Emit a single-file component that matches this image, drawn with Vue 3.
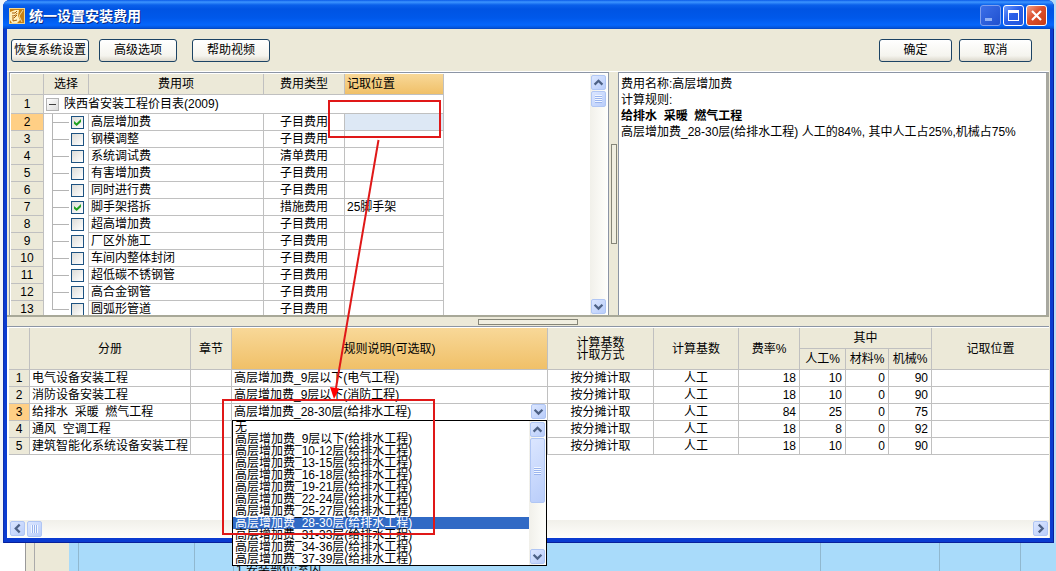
<script setup>
import { ref } from 'vue'

const fees = ref([
  { name: '高层增加费', type: '子目费用', place: '', on: true },
  { name: '钢模调整', type: '子目费用', place: '', on: false },
  { name: '系统调试费', type: '清单费用', place: '', on: false },
  { name: '有害增加费', type: '子目费用', place: '', on: false },
  { name: '同时进行费', type: '子目费用', place: '', on: false },
  { name: '脚手架搭拆', type: '措施费用', place: '25脚手架', on: true },
  { name: '超高增加费', type: '子目费用', place: '', on: false },
  { name: '厂区外施工', type: '子目费用', place: '', on: false },
  { name: '车间内整体封闭', type: '子目费用', place: '', on: false },
  { name: '超低碳不锈钢管', type: '子目费用', place: '', on: false },
  { name: '高合金钢管', type: '子目费用', place: '', on: false },
  { name: '圆弧形管道', type: '子目费用', place: '', on: false },
])

const volumes = [
  { name: '电气设备安装工程', rule: '高层增加费_9层以下(电气工程)', rate: 18, labor: 10, material: 0, machine: 90 },
  { name: '消防设备安装工程', rule: '高层增加费_9层以下(消防工程)', rate: 18, labor: 10, material: 0, machine: 90 },
  { name: '给排水\u00a0 采暖\u00a0 燃气工程', rule: '', rate: 84, labor: 25, material: 0, machine: 75, active: true },
  { name: '通风\u00a0 空调工程', rule: '', rate: 18, labor: 8, material: 0, machine: 92 },
  { name: '建筑智能化系统设备安装工程', rule: '', rate: 18, labor: 10, material: 0, machine: 90 },
]

const floors = ['9层以下', '10-12层', '13-15层', '16-18层', '19-21层', '22-24层', '25-27层', '28-30层', '31-33层', '34-36层', '37-39层']
const options = ['无', ...floors.map((f) => `高层增加费_${f}(给排水工程)`)]
const chosen = ref(options[8])
</script>

<template>
  <div class="desktop">
    <div class="backdrop" aria-hidden="true">
      <div class="sheet">
        <span class="b-edge"></span><span class="b-gap"></span><span class="b-head"></span>
        <span class="b-cell c9"></span><span class="b-cell c116"></span>
        <span class="b-cell c39"></span><span class="b-cell wide">1 安装部位:室内</span>
        <span class="b-cell c119"></span><span class="b-cell c81"></span><span class="b-cell c35"></span>
      </div>
    </div>

    <main class="window">
      <header class="titlebar">
        <svg class="logo" viewBox="0 0 16 16" aria-hidden="true">
          <rect width="16" height="16" fill="#f3d58c" />
          <rect x="1" y="1" width="14" height="14" fill="#c98212" />
          <path d="M1 4 6 2 10 2 9 8 11 12 8 15 3 15 1 12z" fill="#fff0bd" />
          <path d="M3 5h3l2-2M3 8c3 0 4-1 5-3M4 9v4l4-1M8 7l-3 3" fill="none" stroke="#a85f08" />
          <path d="M14 2 10 8l3 6" fill="none" stroke="#f7dc9a" />
        </svg>
        <h1>统一设置安装费用</h1>
        <button type="button" class="cap min" aria-label="最小化">
          <svg viewBox="0 0 19 19"><path d="M4 12h7v3H4z" fill="#8fb0f5" /></svg>
        </button>
        <button type="button" class="cap" aria-label="最大化">
          <svg viewBox="0 0 19 19"><path d="M4 4h11v11H4z M5 7v7h9V7z" fill="#fff" fill-rule="evenodd" /></svg>
        </button>
        <button type="button" class="cap close" aria-label="关闭">
          <svg viewBox="0 0 19 19"><path d="M5 5l9 9M14 5l-9 9" stroke="#fff" stroke-width="2.2" /></svg>
        </button>
      </header>

      <div class="body">
        <div class="toolbar">
          <button type="button" class="btn">恢复系统设置</button>
          <button type="button" class="btn">高级选项</button>
          <button type="button" class="btn video">帮助视频</button>
          <span class="fill"></span>
          <button type="button" class="btn short">确定</button>
          <button type="button" class="btn short">取消</button>
        </div>

        <div class="upper">
          <section class="panel fees">
            <div class="viewport">
              <table class="fee-table">
                <colgroup><col class="w33" /><col class="w45" /><col class="w175" /><col class="w81" /><col class="w99" /></colgroup>
                <thead>
                  <tr><th></th><th>选择</th><th>费用项</th><th>费用类型</th><th class="hot left">记取位置</th></tr>
                </thead>
                <tbody>
                  <tr class="root">
                    <th scope="row">1</th>
                    <td colspan="4">
                      <div class="root-line">
                        <button type="button" class="toggle" aria-label="折叠"></button>
                        <span>陕西省安装工程价目表(2009)</span>
                      </div>
                    </td>
                  </tr>
                  <tr v-for="(f, i) in fees" :key="f.name">
                    <th scope="row" :class="{ current: i === 0 }">{{ i + 2 }}</th>
                    <td class="pick">
                      <div class="pick-line">
                        <span class="branch" :class="{ last: i === fees.length - 1 }"></span>
                        <input :id="'fee' + i" v-model="f.on" type="checkbox" />
                      </div>
                    </td>
                    <td><label :for="'fee' + i">{{ f.name }}</label></td>
                    <td class="mid">{{ f.type }}</td>
                    <td :class="{ focus: i === 0 }">{{ f.place }}</td>
                  </tr>
                </tbody>
              </table>
            </div>
            <div class="vbar">
              <button type="button" class="sb" aria-label="向上"><svg viewBox="0 0 15 15"><path d="M3 10l4.500-4.500L12 10" /></svg></button>
              <span class="thumb"><i class="ridges"></i></span>
              <span class="fill"></span>
              <button type="button" class="sb" aria-label="向下"><svg viewBox="0 0 15 15"><path d="M3 5.500l4.500 4.500L12 5.500" /></svg></button>
            </div>
          </section>
          <div class="vsplit"><span class="grip"></span></div>
          <section class="panel note">
            <p>费用名称:高层增加费</p>
            <p>计算规则:</p>
            <p><b>给排水&nbsp; 采暖&nbsp; 燃气工程</b></p>
            <p>高层增加费_28-30层(给排水工程) 人工的84%, 其中人工占25%,机械占75%</p>
          </section>
        </div>

        <div class="hsplit"><span class="grip"></span></div>

        <section class="lower">
          <table class="rule-table">
            <colgroup>
              <col class="w21" /><col class="w161" /><col class="w41" /><col class="w316" /><col class="w106" />
              <col class="w85" /><col class="w61" /><col class="w46" /><col class="w43" /><col class="w43" /><col />
            </colgroup>
            <thead>
              <tr>
                <th rowspan="2"></th><th rowspan="2">分册</th><th rowspan="2">章节</th>
                <th rowspan="2" class="hot">规则说明(可选取)</th>
                <th rowspan="2" class="stack">计算基数<br />计取方式</th>
                <th rowspan="2">计算基数</th><th rowspan="2">费率%</th>
                <th colspan="3">其中</th><th rowspan="2" class="end">记取位置</th>
              </tr>
              <tr><th>人工%</th><th>材料%</th><th>机械%</th></tr>
            </thead>
            <tbody>
              <tr v-for="(v, i) in volumes" :key="v.name">
                <th scope="row" :class="{ current: v.active }">{{ i + 1 }}</th>
                <td>{{ v.name }}</td>
                <td></td>
                <td v-if="v.active" class="editor">
                  <div class="combo">
                    <select v-model="chosen" aria-label="规则说明">
                      <option v-for="o in options" :key="o">{{ o }}</option>
                    </select>
                    <span class="drop"><svg viewBox="0 0 15 15"><path d="M3 5.500l4.500 4.500L12 5.500" /></svg></span>
                  </div>
                  <div class="popup">
                    <ul role="listbox" aria-label="规则选项">
                      <li v-for="o in options" :key="o" role="option" :aria-selected="o === chosen" :class="{ sel: o === chosen }" @click="chosen = o">{{ o }}</li>
                    </ul>
                    <div class="vbar">
                      <button type="button" class="sb" aria-label="向上"><svg viewBox="0 0 15 15"><path d="M3 10l4.500-4.500L12 10" /></svg></button>
                      <span class="thumb tall"><i class="ridges"></i></span>
                      <span class="fill"></span>
                      <button type="button" class="sb" aria-label="向下"><svg viewBox="0 0 15 15"><path d="M3 5.500l4.500 4.500L12 5.500" /></svg></button>
                    </div>
                  </div>
                </td>
                <td v-else>{{ v.rule }}</td>
                <td class="mid">按分摊计取</td>
                <td class="mid">人工</td>
                <td class="num">{{ v.rate }}</td>
                <td class="num">{{ v.labor }}</td>
                <td class="num">{{ v.material }}</td>
                <td class="num">{{ v.machine }}</td>
                <td class="end"></td>
              </tr>
            </tbody>
          </table>
          <div class="hbar">
            <button type="button" class="sb" aria-label="向左"><svg viewBox="0 0 15 15"><path d="M10 3L5.500 7.500 10 12" /></svg></button>
            <span class="thumb"><i class="ridges side"></i></span>
            <span class="fill"></span>
            <button type="button" class="sb" aria-label="向右"><svg viewBox="0 0 15 15"><path d="M5.500 3l4.500 4.500L5.500 12" /></svg></button>
          </div>
        </section>
      </div>
    </main>

    <svg class="marks" width="460" height="560" viewBox="0 0 460 560" aria-hidden="true">
      <g fill="none" stroke="#e01818" stroke-width="2">
        <rect x="329" y="101" width="111" height="36" />
        <rect x="223" y="400" width="211" height="134" />
        <path d="M378.500 140L336 388" />
      </g>
      <path d="M334 399l-4-12 9.500 1.500z" fill="#f00" />
    </svg>
  </div>
</template>

<style>
body {
  margin: 0;
}
</style>

<style scoped>
* {
  box-sizing: border-box;
}
.desktop {
  position: relative;
  min-height: 100vh;
  padding: 0 2px 28px 3px;
  overflow: hidden;
  font: 12px/16px "Liberation Sans", "Noto Sans CJK SC", sans-serif;
  color: #000;
}
button,
select {
  font: inherit;
  color: inherit;
  padding: 0;
}
.backdrop {
  position: absolute;
  inset: 0;
  display: flex;
  flex-direction: column;
  justify-content: flex-end;
  background: linear-gradient(90deg, #f2f5fa 50%, #b4dcf8 50%);
}
.sheet {
  display: flex;
  height: 28px;
  background: #a9dbfa;
}
.b-edge {
  width: 26px;
  background: #fff;
  border-right: 1px solid #999;
}
.b-gap {
  width: 9px;
  background: #ece9d8;
  border-right: 1px solid #aaa;
}
.b-head {
  width: 34px;
  background: #ece9d8;
}
.b-cell {
  border-right: 1px solid #90b8cf;
  white-space: nowrap;
}
.c9 { width: 10px; }
.c116 { width: 116px; }
.c39 { width: 39px; }
.wide {
  flex: 1;
  padding: 19px 2px 0;
}
.c119 { width: 119px; }
.c81 { width: 81px; }
.c35 { width: 35px; border: 0; }

.window {
  position: relative;
  border-radius: 7px 7px 0 0;
  background: #0a3bd0;
  box-shadow: inset 1px 0 #0c2fb0, inset -1px -1px #08209a;
  padding: 0 4px 5px;
}
.titlebar {
  display: flex;
  align-items: center;
  gap: 2px;
  height: 29px;
  margin: 0 -4px;
  padding: 2px 7px 0 6px;
  border-radius: 7px 7px 0 0;
  background: linear-gradient(#0a5ae8 0, #3d95ff 2px, #0a60ea 5px, #0054e3 9px, #0058ea 18px, #0566fc 25px, #0453d8 28px, #0341b8);
}
.logo {
  width: 16px;
  height: 16px;
}
h1 {
  flex: 1;
  margin: 0 0 0 2px;
  font-size: 14px;
  line-height: 20px;
  font-weight: 700;
  color: #fff;
  text-shadow: 1px 1px #0b2a80;
}
.cap {
  width: 21px;
  height: 21px;
  border: 1px solid #fff;
  border-radius: 3px;
  background: linear-gradient(135deg, #6d9bff, #2a5fe8 45%, #2257dc);
}
.cap svg {
  display: block;
  width: 19px;
  height: 19px;
}
.min {
  border-color: #7f9fee;
  background: linear-gradient(135deg, #3c6fe8, #1f50cf);
}
.close {
  background: linear-gradient(135deg, #f0a088, #dc4f2c 45%, #c83c14);
}
.body {
  background: #ece9d8;
  padding-right: 1px;
}
.toolbar {
  display: flex;
  align-items: center;
  gap: 7px;
  height: 43px;
  padding: 0 17px 0 4px;
  border-bottom: 1px solid #fff;
}
.fill {
  flex: 1;
}
.btn {
  width: 78px;
  height: 23px;
  margin-right: 3px;
  border: 1px solid #1c4364;
  border-radius: 3px;
  background: linear-gradient(#fff, #f5f4ee 75%, #dcd8cc);
  white-space: nowrap;
}
.video {
  margin-left: 5px;
}
.short {
  width: 73px;
  margin-right: 0;
}
.upper {
  display: flex;
  padding-left: 2px;
  border-bottom: 2px solid #a8a898;
}
.panel {
  border: 1px solid #8c95a5;
  border-bottom: 0;
  background: #fff;
}
.fees {
  flex: 0 1 600px;
  display: flex;
  padding: 1px 1px 0;
}
.viewport {
  flex: 1;
  height: 241px;
  overflow: hidden;
}
table {
  table-layout: fixed;
  border-collapse: separate;
  border-spacing: 0;
}
.fee-table {
  width: 433px;
}
.w33 { width: 33px; }
.w45 { width: 45px; }
.w175 { width: 175px; }
.w81 { width: 81px; }
.w99 { width: 99px; }
.w21 { width: 21px; }
.w161 { width: 161px; }
.w41 { width: 41px; }
.w316 { width: 316px; }
.w106 { width: 106px; }
.w85 { width: 85px; }
.w61 { width: 61px; }
.w46 { width: 46px; }
.w43 { width: 43px; }
th,
td {
  height: 17px;
  padding: 0 2px;
  border-right: 1px solid #c0c0c0;
  border-bottom: 1px solid #c0c0c0;
  font-weight: 400;
  line-height: 16px;
  white-space: nowrap;
  text-align: left;
  vertical-align: middle;
}
th {
  background: #ece9d8;
  text-align: center;
}
thead th {
  height: 21px;
}
.left {
  text-align: left;
}
.hot {
  background: linear-gradient(#f8d898, #f0c068);
}
.current {
  background: #ffcf85;
}
.root th,
.root td {
  height: 19px;
}
.root-line {
  display: flex;
  align-items: center;
  gap: 5px;
}
.toggle {
  width: 13px;
  height: 13px;
  border: 1px solid #b4b4b4;
  background: linear-gradient(#404040, #404040) center / 7px 1px no-repeat, linear-gradient(135deg, #fff, #dcdcdc);
}
.pick {
  padding: 0 0 0 8px;
  border-bottom: 0;
}
.pick-line {
  display: flex;
  align-items: center;
  gap: 2px;
  height: 17px;
}
.branch {
  width: 17px;
  height: 17px;
  border-left: 1px solid #b4b4b4;
  background: linear-gradient(#b4b4b4, #b4b4b4) 0 8px / 100% 1px no-repeat;
}
.last {
  height: 9px;
  align-self: flex-start;
}
input[type="checkbox"] {
  appearance: none;
  width: 13px;
  height: 13px;
  margin: 0;
  border: 1px solid #1d5281;
  background: linear-gradient(135deg, #dcdcd8, #fff);
}
input:checked::after {
  content: "";
  display: block;
  width: 7px;
  height: 7px;
  margin: 2px;
  background: #21a121;
  clip-path: polygon(0 28%, 38% 62%, 100% 0, 100% 42%, 38% 100%, 0 68%);
}
.mid {
  text-align: center;
}
.num {
  text-align: right;
  padding-right: 3px;
}
.focus {
  background: #dde8f5;
}
.vbar {
  display: flex;
  flex-direction: column;
  gap: 1px;
  width: 17px;
  padding: 1px;
  background: linear-gradient(90deg, #f1f0ea, #fefefb);
}
.sb,
.thumb,
.drop {
  display: block;
  flex: none;
  width: 15px;
  height: 15px;
  border: 1px solid #b0c6f4;
  border-radius: 2px;
  background: linear-gradient(135deg, #dbe6ff, #b9cdfa);
}
.sb svg,
.drop svg {
  display: block;
  width: 13px;
  height: 13px;
  fill: none;
  stroke: #4d6185;
  stroke-width: 2.600;
}
.thumb {
  display: flex;
  align-items: center;
  justify-content: center;
  height: 16px;
}
.tall {
  height: 65px;
}
.ridges {
  width: 7px;
  height: 8px;
  background: repeating-linear-gradient(#f2f7ff 0 1px, #9ab4ee 1px 2px);
}
.side {
  background: repeating-linear-gradient(90deg, #f2f7ff 0 1px, #9ab4ee 1px 2px);
}
.vsplit {
  display: flex;
  align-items: center;
  justify-content: center;
  width: 9px;
}
.grip {
  border: 1px solid #858578;
  background: #f0eee0;
}
.vsplit .grip {
  width: 6px;
  height: 100px;
}
.note {
  flex: 1;
  padding: 3px 2px;
  border-right: 3px solid #a8a8a0;
}
p {
  margin: 0;
}
.hsplit {
  display: flex;
  justify-content: center;
  align-items: center;
  height: 9px;
}
.hsplit .grip {
  width: 100px;
  height: 6px;
}
.lower {
  padding: 1px 0 0 2px;
  border-top: 1px solid #8c95a5;
  background: #fff;
}
.rule-table {
  width: 100%;
}
.stack {
  line-height: 12px;
}
.end {
  border-right: 0;
}
.editor {
  position: relative;
  padding: 0;
}
.combo {
  display: flex;
  height: 16px;
  padding-right: 1px;
}
select {
  flex: 1;
  appearance: none;
  height: 16px;
  padding: 0 2px;
  border: 0;
  background: #fff;
}
.popup {
  position: absolute;
  z-index: 2;
  top: 100%;
  left: 0;
  display: flex;
  width: 100%;
  border: 1px solid #000;
  background: #fff;
}
ul {
  flex: 1;
  margin: 0;
  padding: 0;
  list-style: none;
}
li {
  height: 12px;
  padding: 0 2px;
  line-height: 12px;
}
.sel {
  background: #316ac5;
  color: #fff;
}
.hbar {
  display: flex;
  gap: 2px;
  margin-top: 65px;
  padding: 1px;
  height: 18px;
  background: linear-gradient(#f1f0ea, #fefefb);
}
.marks {
  position: absolute;
  z-index: 3;
  top: 0;
  left: 0;
  pointer-events: none;
}
</style>
